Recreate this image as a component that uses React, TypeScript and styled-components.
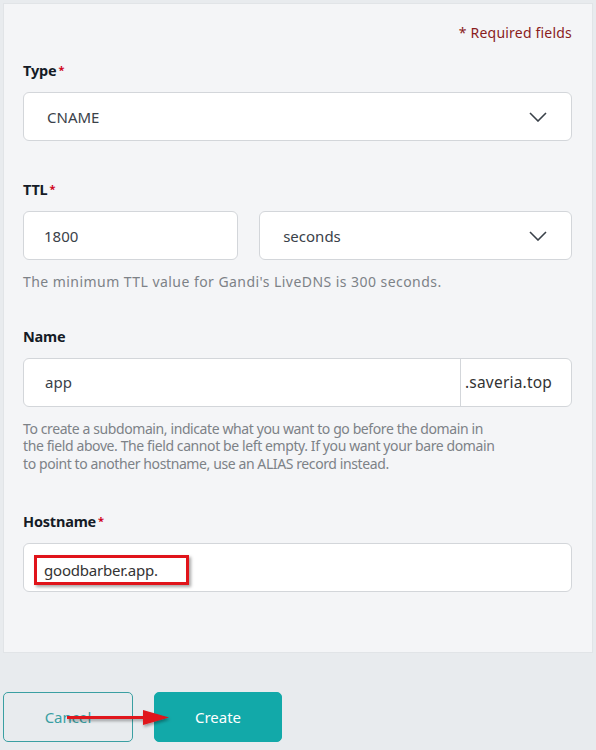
import React from "react";
import styled, { createGlobalStyle } from "styled-components";

const Global = createGlobalStyle`
  html, body { margin: 0; padding: 0; background: #e8ebee; }
  body { font-family: "Noto Sans", "Open Sans", sans-serif; }
  * { box-sizing: border-box; }
`;

const Page = styled.div`
  width: 596px;
  height: 750px;
  padding: 3px 3px 0 3px;
  background: #e8ebee;
  display: flex;
  flex-direction: column;
`;

const Panel = styled.div`
  width: 590px;
  height: 650px;
  background: #f4f5f7;
  border: 1px solid #e1e4e7;
  padding: 19px 20px 0 19px;
  display: flex;
  flex-direction: column;
`;

const Required = styled.div`
  align-self: flex-end;
  font-size: 14px;
  line-height: 20px;
  color: #8a1c1c;
  letter-spacing: 0.2px;
`;

const Field = styled.div<{ $top: number }>`
  margin-top: ${(p) => p.$top}px;
  display: flex;
  flex-direction: column;
`;

const Label = styled.div`
  font-size: 14.5px;
  line-height: 20px;
  font-weight: 700;
  color: #151b26;
  margin-bottom: 12px;
  letter-spacing: -0.2px;
`;

const Star = styled.span`
  color: #d0021b;
  font-size: 11px;
  vertical-align: top;
  margin-left: 2px;
`;

const Box = styled.div<{ $w?: string }>`
  position: relative;
  height: 49px;
  width: ${(p) => p.$w || "100%"};
  background: #fff;
  border: 1px solid #d3d6da;
  border-radius: 6px;
  display: flex;
  align-items: center;
  font-size: 15px;
  color: #3a4149;
`;

const BoxText = styled.div<{ $pl: number }>`
  flex: 1;
  padding-left: ${(p) => p.$pl}px;
`;

const Chevron = styled.svg`
  margin-right: 24px;
  width: 18px;
  height: 10px;
`;

const Row = styled.div`
  display: flex;
  gap: 21px;
`;

const Suffix = styled.div`
  width: 111px;
  height: 100%;
  border-left: 1px solid #d3d6da;
  display: flex;
  align-items: center;
  padding-left: 4px;
  font-size: 15.5px;
  color: #333;
  letter-spacing: 0.2px;
`;

const Help = styled.div<{ $mt: number; $ls: number }>`
  margin-top: ${(p) => p.$mt}px;
  max-width: 478px;
  font-size: 14px;
  line-height: 17.5px;
  letter-spacing: ${(p) => p.$ls}px;
  color: #7d8287;
`;

const Annot = styled.div`
  position: absolute;
  left: 10px;
  top: 11px;
  width: 155px;
  height: 30px;
  border: 3px solid #e0141a;
  box-shadow: 2px 2px 3px rgba(0, 0, 0, 0.35);
  display: flex;
  align-items: center;
  padding-left: 7px;
  font-size: 15px;
  color: #333;
  letter-spacing: -0.2px;
`;

const Actions = styled.div`
  position: relative;
  margin-top: 39px;
  display: flex;
  gap: 21px;
`;

const Btn = styled.button<{ $primary?: boolean }>`
  width: ${(p) => (p.$primary ? "128px" : "130px")};
  height: 50px;
  border-radius: 5px;
  font-family: inherit;
  font-size: 15px;
  border: 1px solid ${(p) => (p.$primary ? "#12a9a9" : "#3a9fa2")};
  background: ${(p) => (p.$primary ? "#12a9a9" : "transparent")};
  color: ${(p) => (p.$primary ? "#fff" : "#3a9fa2")};
  padding: 0;
`;

const Arrow = styled.svg`
  position: absolute;
  left: 64px;
  top: 14px;
  width: 110px;
  height: 24px;
  overflow: visible;
`;

const ChevronIcon = () => (
  <Chevron viewBox="0 0 18 10">
    <path d="M1 1 L9 9 L17 1" fill="none" stroke="#3a4149" strokeWidth="1.6" />
  </Chevron>
);

export default function App() {
  return (
    <>
      <Global />
      <Page>
        <Panel>
          <Required>* Required fields</Required>
          <Field $top={17}>
            <Label>
              Type<Star>*</Star>
            </Label>
            <Box>
              <BoxText $pl={23}>CNAME</BoxText>
              <ChevronIcon />
            </Box>
          </Field>
          <Field $top={38}>
            <Label>
              TTL<Star>*</Star>
            </Label>
            <Row>
              <Box $w="216px">
                <BoxText $pl={20}>1800</BoxText>
              </Box>
              <Box $w="314px">
                <BoxText $pl={23}>seconds</BoxText>
                <ChevronIcon />
              </Box>
            </Row>
            <Help $mt={13} $ls={0.45}>
              The minimum TTL value for Gandi's LiveDNS is 300 seconds.
            </Help>
          </Field>
          <Field $top={35}>
            <Label>Name</Label>
            <Box>
              <BoxText $pl={21}>app</BoxText>
              <Suffix>.saveria.top</Suffix>
            </Box>
            <Help $mt={13} $ls={-0.4}>
              To create a subdomain, indicate what you want to go before the domain in the field
              above. The field cannot be left empty. If you want your bare domain to point to
              another hostname, use an ALIAS record instead.
            </Help>
          </Field>
          <Field $top={39}>
            <Label>
              Hostname<Star>*</Star>
            </Label>
            <Box>
              <Annot>goodbarber.app.</Annot>
            </Box>
          </Field>
        </Panel>
        <Actions>
          <Btn>Cancel</Btn>
          <Btn $primary>Create</Btn>
          <Arrow viewBox="0 0 110 24">
            <defs>
              <filter id="sh" x="-10%" y="-50%" width="130%" height="200%">
                <feDropShadow dx="1" dy="2" stdDeviation="1.5" floodColor="#000" floodOpacity="0.35" />
              </filter>
            </defs>
            <g filter="url(#sh)">
              <rect x="0" y="10" width="80" height="3" fill="#e0141a" />
              <polygon points="76,4 102,11.5 76,19" fill="#e0141a" />
            </g>
          </Arrow>
        </Actions>
      </Page>
    </>
  );
}
